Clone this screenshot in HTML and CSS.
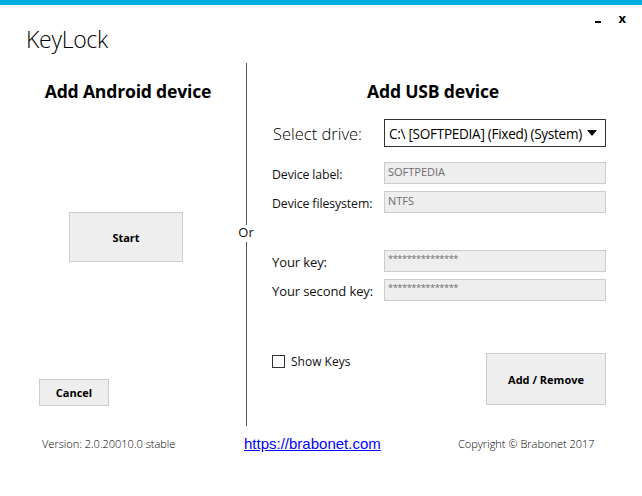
FILE: index.html
```html
<!DOCTYPE html>
<html lang="en">
<head>
<meta charset="utf-8"/>
<meta content="width=device-width, initial-scale=1" name="viewport"/>
<title>KeyLock</title>
<link rel="stylesheet" href="styles.css">
</head>
<body>
<div class="topbar"></div>
<div class="header">
  <div class="app-title">KeyLock</div>
  <div class="win-controls">
    <span class="win-min"></span>
    <span class="win-close">x</span>
  </div>
</div>
<div class="main">
  <div class="col-left">
    <div class="heading">Add Android device</div>
    <button class="btn btn-start">Start</button>
    <button class="btn btn-cancel">Cancel</button>
  </div>
  <div class="divider">
    <div class="line line-top"></div>
    <div class="or">Or</div>
    <div class="line line-bottom"></div>
  </div>
  <div class="col-right">
    <div class="heading heading-usb">Add USB device</div>
    <div class="row row-drive">
      <div class="label-big">Select drive:</div>
      <div class="select">
        <span class="select-text">C:\ [SOFTPEDIA] (Fixed) (System)</span>
        <span class="caret"></span>
      </div>
    </div>
    <div class="row row-first">
      <div class="label">Device label:</div>
      <input class="field" type="text" value="SOFTPEDIA" readonly/>
    </div>
    <div class="row">
      <div class="label">Device filesystem:</div>
      <input class="field" type="text" value="NTFS" readonly/>
    </div>
    <div class="row row-key">
      <div class="label label-key">Your key:</div>
      <input class="field field-key" type="text" value="***************" readonly/>
    </div>
    <div class="row">
      <div class="label label-key">Your second key:</div>
      <input class="field field-key" type="text" value="***************" readonly/>
    </div>
    <div class="bottom-row">
      <label class="check"><span class="box"></span> Show Keys</label>
      <button class="btn btn-add">Add / Remove</button>
    </div>
  </div>
</div>
<div class="footer">
  <div class="version">Version: 2.0.20010.0 stable</div>
  <a class="link" href="#">https://brabonet.com</a>
  <div class="copyright">Copyright © Brabonet 2017</div>
</div>
</body>
</html>
```

FILE: styles.css
```css
body {
  margin: 0;
  padding: 0;
  background: white;
  font-family: "Open Sans", "Noto Sans", sans-serif;
  color: #000;
  width: 642px;
  height: 496px;
  overflow: hidden;
}
.topbar {
  height: 5px;
  background: #00acdc;
}
.header {
  height: 58px;
  display: flex;
  justify-content: space-between;
  align-items: flex-start;
}
.app-title {
  font-size: 23px;
  font-weight: 300;
  padding: 20px 0 0 26px;
  line-height: 28px;
  letter-spacing: -0.3px;
}
.win-controls {
  display: flex;
  align-items: center;
  gap: 17px;
  padding: 6px 16px 0 0;
}
.win-min {
  width: 6px;
  height: 2px;
  background: #000;
  margin-top: 7px;
}
.win-close {
  font-size: 13px;
  font-weight: bold;
  line-height: 14px;
}
.main {
  height: 363px;
  display: flex;
}
.col-left {
  width: 216px;
  padding: 16px 0 0 20px;
  display: flex;
  flex-direction: column;
  align-items: center;
}
.heading {
  font-size: 17.6px;
  font-weight: bold;
  line-height: 24px;
  text-align: center;
  letter-spacing: -0.2px;
}
.btn {
  background: #eeeeee;
  border: 1px solid #cccccc;
  font-family: "Open Sans", "Noto Sans", sans-serif;
  font-weight: bold;
  font-size: 11px;
  color: #000;
  padding: 0;
  box-sizing: border-box;
}
.btn-start {
  width: 114px;
  height: 50px;
  margin-top: 109px;
  margin-right: 4px;
}
.btn-cancel {
  width: 70px;
  height: 27px;
  margin-top: 117px;
  align-self: flex-start;
  margin-left: 19px;
}
.divider {
  width: 20px;
  display: flex;
  flex-direction: column;
  align-items: center;
}
.line {
  width: 1px;
  background: #555;
}
.line-top {
  height: 162px;
}
.line-bottom {
  flex: 1;
}
.or {
  font-size: 13px;
  line-height: 15px;
  padding: 0 0 2px 0;
  color: #111;
}
.col-right {
  width: 334px;
  padding: 16px 0 0 16px;
}
.heading-usb {
  padding-right: 12px;
}
.row {
  display: flex;
  align-items: center;
  margin-top: 7px;
}
.row-drive {
  margin-top: 16px;
}
.row-first {
  margin-top: 15px;
}
.row-key {
  margin-top: 37px;
}
.label-big {
  width: 112px;
  font-size: 16.5px;
  font-weight: 300;
  padding-left: 1px;
  box-sizing: border-box;
}
.label {
  width: 112px;
  font-size: 12.3px;
  color: #111;
  padding-top: 2px;
  letter-spacing: -0.1px;
}
.label-key {
  font-size: 13px;
}
.select {
  width: 222px;
  height: 28px;
  box-sizing: border-box;
  border: 1px solid #333;
  display: flex;
  align-items: center;
  padding-left: 4px;
  position: relative;
  overflow: hidden;
}
.select-text {
  font-size: 13.6px;
  white-space: nowrap;
  letter-spacing: -0.3px;
}
.caret {
  position: absolute;
  right: 8px;
  top: 10px;
  width: 0;
  height: 0;
  border-left: 5px solid transparent;
  border-right: 5px solid transparent;
  border-top: 6px solid #000;
}
.field {
  width: 222px;
  height: 22px;
  box-sizing: border-box;
  border: 1px solid #cccccc;
  background: #eeeeee;
  color: #6d6d6d;
  font-family: "Open Sans", "Noto Sans", sans-serif;
  font-size: 11px;
  padding: 0 0 4px 3px;
  margin: 0;
  outline: none;
}
.field-key {
  font-size: 9.4px;
  letter-spacing: -0.5px;
  padding-bottom: 6px;
}
.bottom-row {
  display: flex;
  justify-content: space-between;
  align-items: flex-start;
  margin-top: 52px;
}
.check {
  display: flex;
  align-items: center;
  gap: 6px;
  font-size: 12px;
  color: #111;
}
.box {
  width: 11px;
  height: 11px;
  border: 1px solid #333;
  background: white;
}
.btn-add {
  width: 120px;
  height: 52px;
}
.footer {
  display: flex;
  align-items: center;
  height: 34px;
  font-size: 11px;
  font-weight: 300;
}
.version {
  width: 202px;
  padding-left: 42px;
}
.link {
  width: 214px;
  font-family: "Liberation Sans", Arial, sans-serif;
  font-size: 15px;
  color: #0000ff;
  text-decoration: underline;
}
```
